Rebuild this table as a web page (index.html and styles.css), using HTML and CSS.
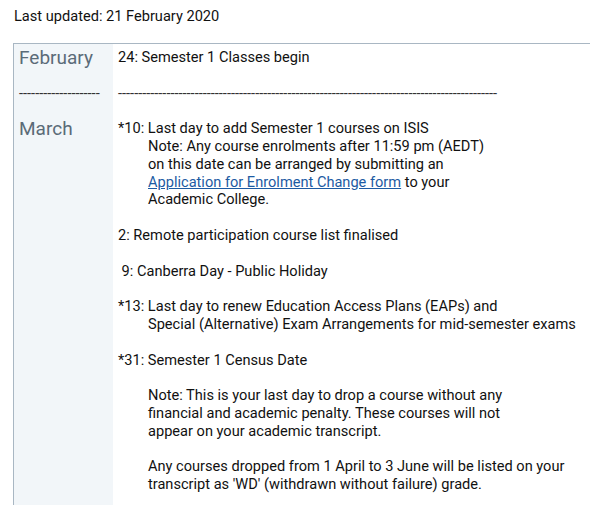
FILE: index.html
```html
<!DOCTYPE html>
<html>
<head>
<meta charset="utf-8">
<link rel="stylesheet" href="styles.css">
</head>
<body>
<p class="updated">Last updated: 21 February 2020</p>
<div class="calendar">
  <div class="month">February</div>
  <div class="events">
    <p class="entry">24: Semester 1 Classes begin</p>
  </div>
  <div class="month sep">--------------------</div>
  <div class="events">
    <p class="entry sep">----------------------------------------------------------------------------------------------</p>
  </div>
  <div class="month">March</div>
  <div class="events">
    <p class="entry">*10: Last day to add Semester 1 courses on ISIS<br>Note: Any course enrolments after 11:59 pm (AEDT)<br>on this date can be arranged by submitting an<br><a href="#">Application for Enrolment Change form</a> to your<br>Academic College.</p>
    <p class="entry">2: Remote participation course list finalised</p>
    <p class="entry">&nbsp;9: Canberra Day - Public Holiday</p>
    <p class="entry">*13: Last day to renew Education Access Plans (EAPs) and<br>Special (Alternative) Exam Arrangements for mid-semester exams</p>
    <p class="entry">*31: Semester 1 Census Date<br><br>Note: This is your last day to drop a course without any<br>financial and academic penalty. These courses will not<br>appear on your academic transcript.<br><br>Any courses dropped from 1 April to 3 June will be listed on your<br>transcript as 'WD' (withdrawn without failure) grade.</p>
  </div>
</div>
</body>
</html>
```
FILE: styles.css
```css
html, body {
  margin: 0;
  padding: 0;
  background: #ffffff;
}
body {
  font-family: Roboto, "Liberation Sans", sans-serif;
  font-size: 14.6px;
  line-height: 17.8px;
  color: #111111;
  overflow: hidden;
}
.updated {
  margin: 0;
  padding: 8px 0 0 14px;
  height: 35px;
}
.calendar {
  margin-left: 13px;
  border-top: 1px solid #a9b7c3;
  border-left: 1px solid #a9b7c3;
  display: grid;
  grid-template-columns: 99px 1fr;
  min-height: 470px;
  background: linear-gradient(to right, #f2f6f9 99px, #ffffff 99px);
  padding-top: 5px;
  align-content: start;
}
.month {
  padding-left: 5px;
  font-size: 19px;
  color: #5b6b78;
  white-space: nowrap;
}
.month.sep {
  font-size: 14.6px;
  color: #333333;
}
.events {
  padding-left: 5px;
}
.entry {
  margin: 0 0 17.8px 0;
  padding-left: 30px;
  text-indent: -30px;
  white-space: nowrap;
}
.entry.sep {
  color: #333333;
}
a {
  color: #1d5ba3;
  text-decoration: underline;
}
```
